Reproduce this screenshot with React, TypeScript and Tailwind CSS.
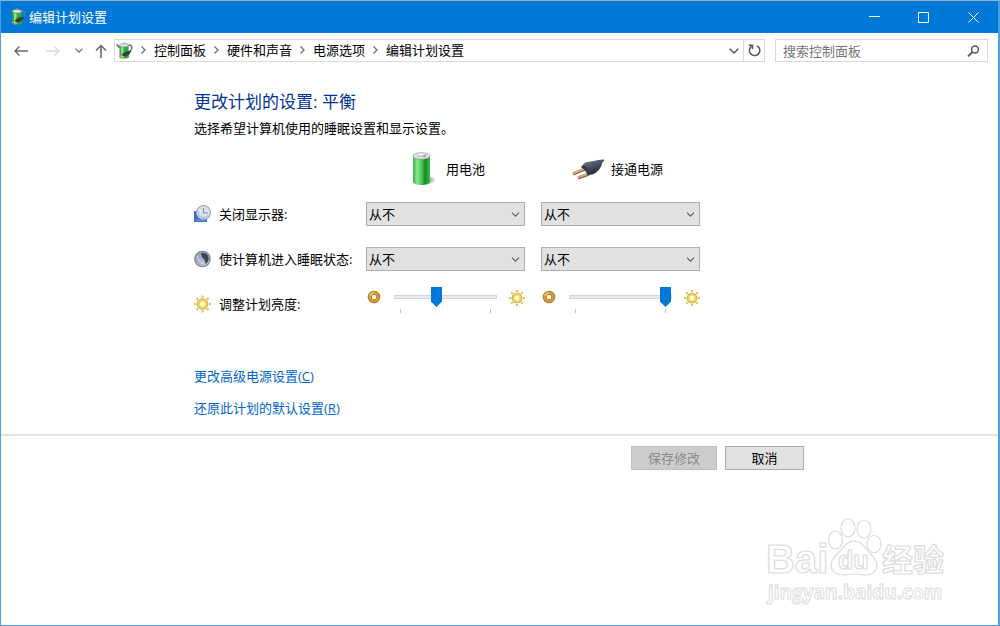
import { useState } from 'react'
import type { ReactNode } from 'react'

const CRUMBS = ['控制面板', '硬件和声音', '电源选项', '编辑计划设置']

const TIMEOUTS = ['1 分钟', '5 分钟', '10 分钟', '30 分钟', '1 小时', '从不']

export default function App() {
  return (
    <div className="relative flex min-h-screen flex-col overflow-hidden border border-t-[#8fb0c8] border-r-2 border-x-[#4ba0e6] border-b-[#3c98e4] bg-white font-['Open_Sans','Noto_Sans_CJK_SC',sans-serif] text-[13px] leading-5 text-black">
      <TitleBar />
      <NavBar />

      <main className="flex-1">
        <div className="pr-4 pl-[193px]">
          <h1 className="pt-7 text-[17px] leading-6 text-[#003399]">更改计划的设置: 平衡</h1>
          <p className="mt-1">选择希望计算机使用的睡眠设置和显示设置。</p>

          <div className="mt-2 grid auto-rows-[45px] grid-cols-[156px_159px_159px] items-center gap-x-4">
            <div />
            <div className="flex items-center gap-2 pl-[42px]">
              <BatteryIcon />
              <span>用电池</span>
            </div>
            <div className="flex items-center gap-1.5 pl-[30px]">
              <PlugIcon />
              <span>接通电源</span>
            </div>

            <RowLabel icon={<DisplayIcon />}>关闭显示器:</RowLabel>
            <TimeoutSelect label="关闭显示器 (用电池)" />
            <TimeoutSelect label="关闭显示器 (接通电源)" />

            <RowLabel icon={<MoonIcon />}>使计算机进入睡眠状态:</RowLabel>
            <TimeoutSelect label="睡眠 (用电池)" />
            <TimeoutSelect label="睡眠 (接通电源)" />

            <RowLabel icon={<SunIcon />}>调整计划亮度:</RowLabel>
            <BrightnessSlider label="亮度 (用电池)" initial={40} />
            <BrightnessSlider label="亮度 (接通电源)" initial={100} />
          </div>

          <div className="mt-10 flex flex-col items-start gap-3 text-[#0066cc]">
            <a href="#advanced" className="hover:underline">
              更改高级电源设置(<u>C</u>)
            </a>
            <a href="#restore" className="hover:underline">
              还原此计划的默认设置(<u>R</u>)
            </a>
          </div>
        </div>

        <div className="mt-4 border-t-2 border-[#e3e3e3] pt-2.5 pl-[193px]">
          <div className="flex max-w-[610px] justify-end gap-2">
            <button disabled className="h-6 w-[86px] border border-[#bfbfbf] bg-[#cccccc] leading-[22px] text-[#8a8a8a]">
              保存修改
            </button>
            <button className="h-6 w-[79px] border border-[#adadad] bg-[#e1e1e1] leading-[22px] hover:border-[#0078d7] hover:bg-[#e5f1fb]">
              取消
            </button>
          </div>
        </div>
      </main>

      <Watermark />
    </div>
  )
}

function TitleBar() {
  return (
    <header className="flex h-8 shrink-0 items-center bg-[#0078d7] text-white">
      <div className="flex flex-1 items-center gap-[3px] pl-2">
        <PowerIcon />
        <span>编辑计划设置</span>
      </div>
      <button aria-label="最小化" className="flex h-8 w-[49px] items-center justify-center hover:bg-white/10">
        <svg width="11" height="11" viewBox="0 0 11 11" stroke="currentColor" fill="none">
          <path d="M0 4.5h11" />
        </svg>
      </button>
      <button aria-label="最大化" className="flex h-8 w-[49px] items-center justify-center hover:bg-white/10">
        <svg width="11" height="11" viewBox="0 0 11 11" stroke="currentColor" fill="none">
          <path d="M.5.5h10v10H.5z" />
        </svg>
      </button>
      <button aria-label="关闭" className="flex h-8 w-[50px] items-center justify-center hover:bg-[#e81123]">
        <svg width="11" height="11" viewBox="0 0 11 11" stroke="currentColor" fill="none">
          <path d="M.5.5l10 10M10.5.5l-10 10" />
        </svg>
      </button>
    </header>
  )
}

function NavBar() {
  return (
    <nav className="flex items-center pt-1.5 pr-2.5">
      <div className="flex w-[113px] shrink-0 items-center pl-[13px] text-[#666]">
        <button aria-label="后退">
          <svg width="14" height="12" viewBox="0 0 14 12" fill="none" stroke="currentColor" strokeWidth="1.4">
            <path d="M14 6H1M5.5 1.5L1 6l4.5 4.5" />
          </svg>
        </button>
        <button aria-label="前进" disabled className="ml-[18px] text-[#d9d9d9]">
          <svg width="14" height="12" viewBox="0 0 14 12" fill="none" stroke="currentColor" strokeWidth="1.4">
            <path d="M0 6h13M8.5 1.5L13 6l-4.5 4.5" />
          </svg>
        </button>
        <button aria-label="最近浏览的位置" className="ml-[15px]">
          <Chevron className="h-[5px] w-2" />
        </button>
        <button aria-label="上移" className="ml-3">
          <svg width="12" height="14" viewBox="0 0 12 14" fill="none" stroke="currentColor" strokeWidth="1.5">
            <path d="M6 14V1.5M1 6.5l5-5 5 5" />
          </svg>
        </button>
      </div>

      <div className="flex h-[23px] flex-1 items-center border border-[#d9d9d9] pl-px">
        <PowerIcon />
        <ol className="flex flex-1 items-center pb-0.5">
          {CRUMBS.map(name => (
            <li key={name} className="flex items-center">
              <svg className="mx-2" width="5" height="8" viewBox="0 0 5 8" fill="none" stroke="#666" strokeWidth="1.2">
                <path d="M.5.5L4 4 .5 7.5" />
              </svg>
              <a href="#crumb">{name}</a>
            </li>
          ))}
        </ol>
        <button aria-label="以前的位置" className="mr-1 text-[#555]">
          <Chevron className="h-1.5 w-2.5" />
        </button>
        <button aria-label="刷新" className="flex h-full w-[21px] items-center justify-center border-l border-[#d9d9d9] text-[#555]">
          <svg width="13" height="13" viewBox="0 0 13 13" fill="none" stroke="currentColor" strokeWidth="1.5">
            <path d="M9 1.8A5.2 5.2 0 1 1 3.6 2.200" />
            <path d="M.8 1.2h3.700v3.700" />
          </svg>
        </button>
      </div>

      <div className="ml-2.5 flex h-[23px] w-[213px] items-center border border-[#d9d9d9] px-[7px]">
        <input
          type="search"
          aria-label="搜索控制面板"
          placeholder="搜索控制面板"
          className="min-w-0 flex-1 outline-none placeholder:text-[#767676]"
        />
        <button aria-label="搜索" className="text-[#555]">
          <svg width="13" height="12" viewBox="0 0 13 12" fill="none" stroke="currentColor" strokeWidth="1.5">
            <circle cx="8" cy="4.5" r="3.4" />
            <path d="M5.5 7L1 11.3" strokeWidth="1.8" />
          </svg>
        </button>
      </div>
    </nav>
  )
}

function RowLabel({ icon, children }: { icon: ReactNode; children: ReactNode }) {
  return (
    <div className="flex items-center gap-2 whitespace-nowrap">
      {icon}
      <span>{children}</span>
    </div>
  )
}

function TimeoutSelect({ label }: { label: string }) {
  return (
    <div className="relative">
      <select
        aria-label={label}
        defaultValue="从不"
        className="block h-6 w-full appearance-none border border-[#adadad] bg-[#e1e1e1] pl-0.5 leading-[22px] hover:border-[#0078d7]"
      >
        {TIMEOUTS.map(t => (
          <option key={t}>{t}</option>
        ))}
      </select>
      <Chevron className="pointer-events-none absolute top-2.5 right-[5px] h-[5px] w-[9px] text-[#606060]" />
    </div>
  )
}

function BrightnessSlider({ label, initial }: { label: string; initial: number }) {
  const [value, setValue] = useState(initial)

  return (
    <div className="flex items-start gap-3 self-start pt-1.5">
      <svg className="mt-[3px] shrink-0" width="16" height="14" viewBox="0 0 16 14">
        <circle cx="8" cy="7" r="4.3" fill="none" stroke="#a8701c" strokeWidth="4" />
        <circle cx="8" cy="7" r="4.2" fill="none" stroke="#d39a3a" strokeWidth="2.8" />
        <path d="M4 6a4.200 4.200 0 0 1 4-3.300" fill="none" stroke="#f0c46c" strokeWidth="1.5" />
      </svg>
      <div className="min-w-0 flex-1">
        <input
          type="range"
          aria-label={label}
          min={0}
          max={100}
          value={value}
          onChange={e => setValue(Number(e.target.value))}
          className="block h-5 w-full appearance-none bg-transparent [&::-webkit-slider-runnable-track]:h-1 [&::-webkit-slider-runnable-track]:border [&::-webkit-slider-runnable-track]:border-[#d6d6d6] [&::-webkit-slider-runnable-track]:bg-[#e7eaea] [&::-webkit-slider-thumb]:-mt-[9px] [&::-webkit-slider-thumb]:h-5 [&::-webkit-slider-thumb]:w-[11px] [&::-webkit-slider-thumb]:appearance-none [&::-webkit-slider-thumb]:bg-[#0078d7] [&::-webkit-slider-thumb]:[clip-path:polygon(0_0,100%_0,100%_72%,50%_100%,0_72%)]"
        />
        {/* tick marks at both ends of the range */}
        <div className="mx-1.5 mt-0.5 h-1 border-x border-[#c4c4c4]" />
      </div>
      <SunIcon className="mt-0.5 h-[18px] w-4" />
    </div>
  )
}

function Chevron({ className }: { className?: string }) {
  return (
    <svg className={className} viewBox="0 0 10 6" fill="none" stroke="currentColor" strokeWidth="1.4">
      <path d="M.7.7L5 5 9.3.7" />
    </svg>
  )
}

function PowerIcon() {
  return (
    <svg className="shrink-0" width="17" height="18" viewBox="0 0 17 18" fill="none">
      <path d="M11.5 3.500c4-1.500 5 1 3.800 4l-2.600 5" stroke="#6d7a70" strokeWidth="1.5" />
      <path d="M.8 2.500l3 3.500" stroke="#5f6b64" strokeWidth="1.8" />
      <path d="M3.500 3.500h9l.5 11.500c0 2-9.500 2-9.500 0z" fill="#2fae3d" />
      <path d="M5 4h2.500v12L5 15.500z" fill="#8be38a" />
      <ellipse cx="8" cy="3.2" rx="4.5" ry="1.8" fill="#d8e4dc" stroke="#77877c" strokeWidth=".6" />
      <path d="M8 1V0" stroke="#a4b0a8" />
      <path d="M4.500 13.500L8 10.500c2-1.500 5-1.500 7-2-.5 2.500-2.500 5.500-6 6z" fill="#3a3d3c" />
      <path d="M3 15l3.500-2M5 16.500l3-2" stroke="#c6a878" strokeWidth="1.1" />
    </svg>
  )
}

function BatteryIcon() {
  return (
    <svg width="30" height="36" viewBox="0 0 30 36">
      <defs>
        <linearGradient id="battery-body">
          <stop offset="0" stopColor="#3eb04a" />
          <stop offset=".25" stopColor="#8be58d" />
          <stop offset=".5" stopColor="#4cc655" />
          <stop offset=".72" stopColor="#138a22" />
          <stop offset="1" stopColor="#3dbb47" />
        </linearGradient>
        <radialGradient id="battery-shadow">
          <stop offset="0" stopColor="#888" />
          <stop offset="1" stopColor="#888" stopOpacity="0" />
        </radialGradient>
      </defs>
      <ellipse cx="20" cy="29" rx="8" ry="5" fill="url(#battery-shadow)" />
      <path d="M5 5v26c0 4 17 4 17 0V5z" fill="url(#battery-body)" />
      <ellipse cx="13.5" cy="5" rx="8.500" ry="3.3" fill="#dde1e5" stroke="#8c9a96" strokeWidth=".7" />
      <path d="M9 5.500l4-3 2 1.500 4-.5-2 3-4-1z" fill="#9da6ba" />
      <ellipse cx="13" cy="3.5" rx="3" ry="1.2" fill="#f8f9fb" />
    </svg>
  )
}

function PlugIcon() {
  return (
    <svg width="34" height="24" viewBox="0 0 34 24" fill="none">
      <defs>
        <linearGradient id="plug-body" x1="0" y1="0" x2=".6" y2="1">
          <stop offset="0" stopColor="#8a8fa4" />
          <stop offset=".5" stopColor="#4c5068" />
          <stop offset="1" stopColor="#22253a" />
        </linearGradient>
      </defs>
      <path d="M2 17l12-5M7 21l11-4" stroke="#8f6038" strokeWidth="3" />
      <path d="M2 16.500l12-5M7 20.500l11-4" stroke="#e3b384" strokeWidth="1.6" />
      <path d="M10 10l4-4.500c5-1.500 9-1 13-2.500l5-.5c2 0 1.500 2-.5 2.500-1 5-4 10-10 12.500l-5 .5c-.5-3-3-6-6.500-8z" fill="url(#plug-body)" />
      <path d="M10 10l3-2c3.500 2.500 5 5.500 6 9.500l-2.500.5c-.5-3-3-6-6.500-8z" fill="#363a50" />
    </svg>
  )
}

function DisplayIcon() {
  return (
    <svg className="shrink-0" width="17" height="18" viewBox="0 0 17 18" fill="none">
      <path d="M0 6l13 1v10H0z" fill="#3f69cf" />
      <path d="M1 15l11 1" stroke="#7599e8" />
      <circle cx="9.5" cy="7.5" r="7" fill="#d9e2ea" stroke="#98a3b0" strokeWidth="1.1" />
      <path d="M4 9a5.500 5.500 0 0 0 10 1.500" stroke="#b5c8dc" strokeWidth="2" />
      <path d="M9.500 3v5H14" stroke="#7e90a2" strokeWidth="1.1" />
      <path d="M9.500 12v1M4 7.500h1" stroke="#8c9aa8" />
    </svg>
  )
}

function MoonIcon() {
  return (
    <svg className="shrink-0" width="17" height="18" viewBox="0 0 17 18">
      <defs>
        <linearGradient id="moon" x1="0" y1="0" x2="1" y2="1">
          <stop offset="0" stopColor="#949cae" />
          <stop offset="1" stopColor="#c5cfe2" />
        </linearGradient>
      </defs>
      <circle cx="8.5" cy="9" r="7.7" fill="url(#moon)" stroke="#85888d" strokeWidth="1.3" />
      <path d="M7 3.500c5-2 8.500 2 7.500 6.500-.5 2-1.500 3-3 4 .5-4.500-4.500-6-4.500-10.500z" fill="#3c4456" />
      <path d="M3.500 6c0 4 2.500 7 6.500 8" stroke="#dce2ef" strokeWidth="1" fill="none" />
    </svg>
  )
}

function SunIcon({ className = 'h-[18px] w-[17px]' }: { className?: string }) {
  return (
    <svg className={`shrink-0 ${className}`} viewBox="0 0 18 18" fill="none">
      <path
        d="M9 0v2.500M9 15.500v2.500M0 9h2.500M15.500 9h2.500M2.500 2.500l1.800 1.800M13.700 13.700l1.800 1.800M2.500 15.500l1.800-1.800M13.700 4.300l1.800-1.800"
        stroke="#dcc05c"
        strokeWidth="2.2"
      />
      <circle cx="9" cy="9" r="4.2" stroke="#c79c2e" strokeWidth="3.6" />
      <circle cx="9" cy="9" r="4" fill="#fffdf0" stroke="#f2d35c" strokeWidth="2.6" />
    </svg>
  )
}

function Watermark() {
  return (
    <svg
      className="pointer-events-none absolute right-[46px] bottom-4 font-['Open_Sans','Noto_Sans_CJK_SC',sans-serif] font-bold"
      width="190"
      height="94"
      viewBox="0 0 190 94"
      fill="#fff"
      stroke="#dcdcdc"
      strokeWidth="1.2"
    >
      <text x="4" y="58" fontSize="40" className="font-['Liberation_Sans',sans-serif]">Bai</text>
      <ellipse cx="73.5" cy="25" rx="7" ry="9" />
      <ellipse cx="86" cy="13" rx="7" ry="9" />
      <ellipse cx="102" cy="14" rx="7" ry="9" />
      <ellipse cx="112" cy="29" rx="7" ry="8.5" />
      <path d="M92 26c-7 0-10 6-14 10s-9 8-9 14c0 7 6 10 12 10 4 0 7-1 11-1s8 1 12 1c6 0 11-4 11-10s-5-9-9-14-7-10-14-10z" />
      <text x="76" y="54" fontSize="25" className="font-['Liberation_Sans',sans-serif]">du</text>
      <text x="120" y="56" fontSize="31" className="font-['Noto_Sans_CJK_SC',sans-serif]">经验</text>
      <text x="6" y="84" fontSize="19" strokeWidth="1">jingyan.baidu.com</text>
    </svg>
  )
}
